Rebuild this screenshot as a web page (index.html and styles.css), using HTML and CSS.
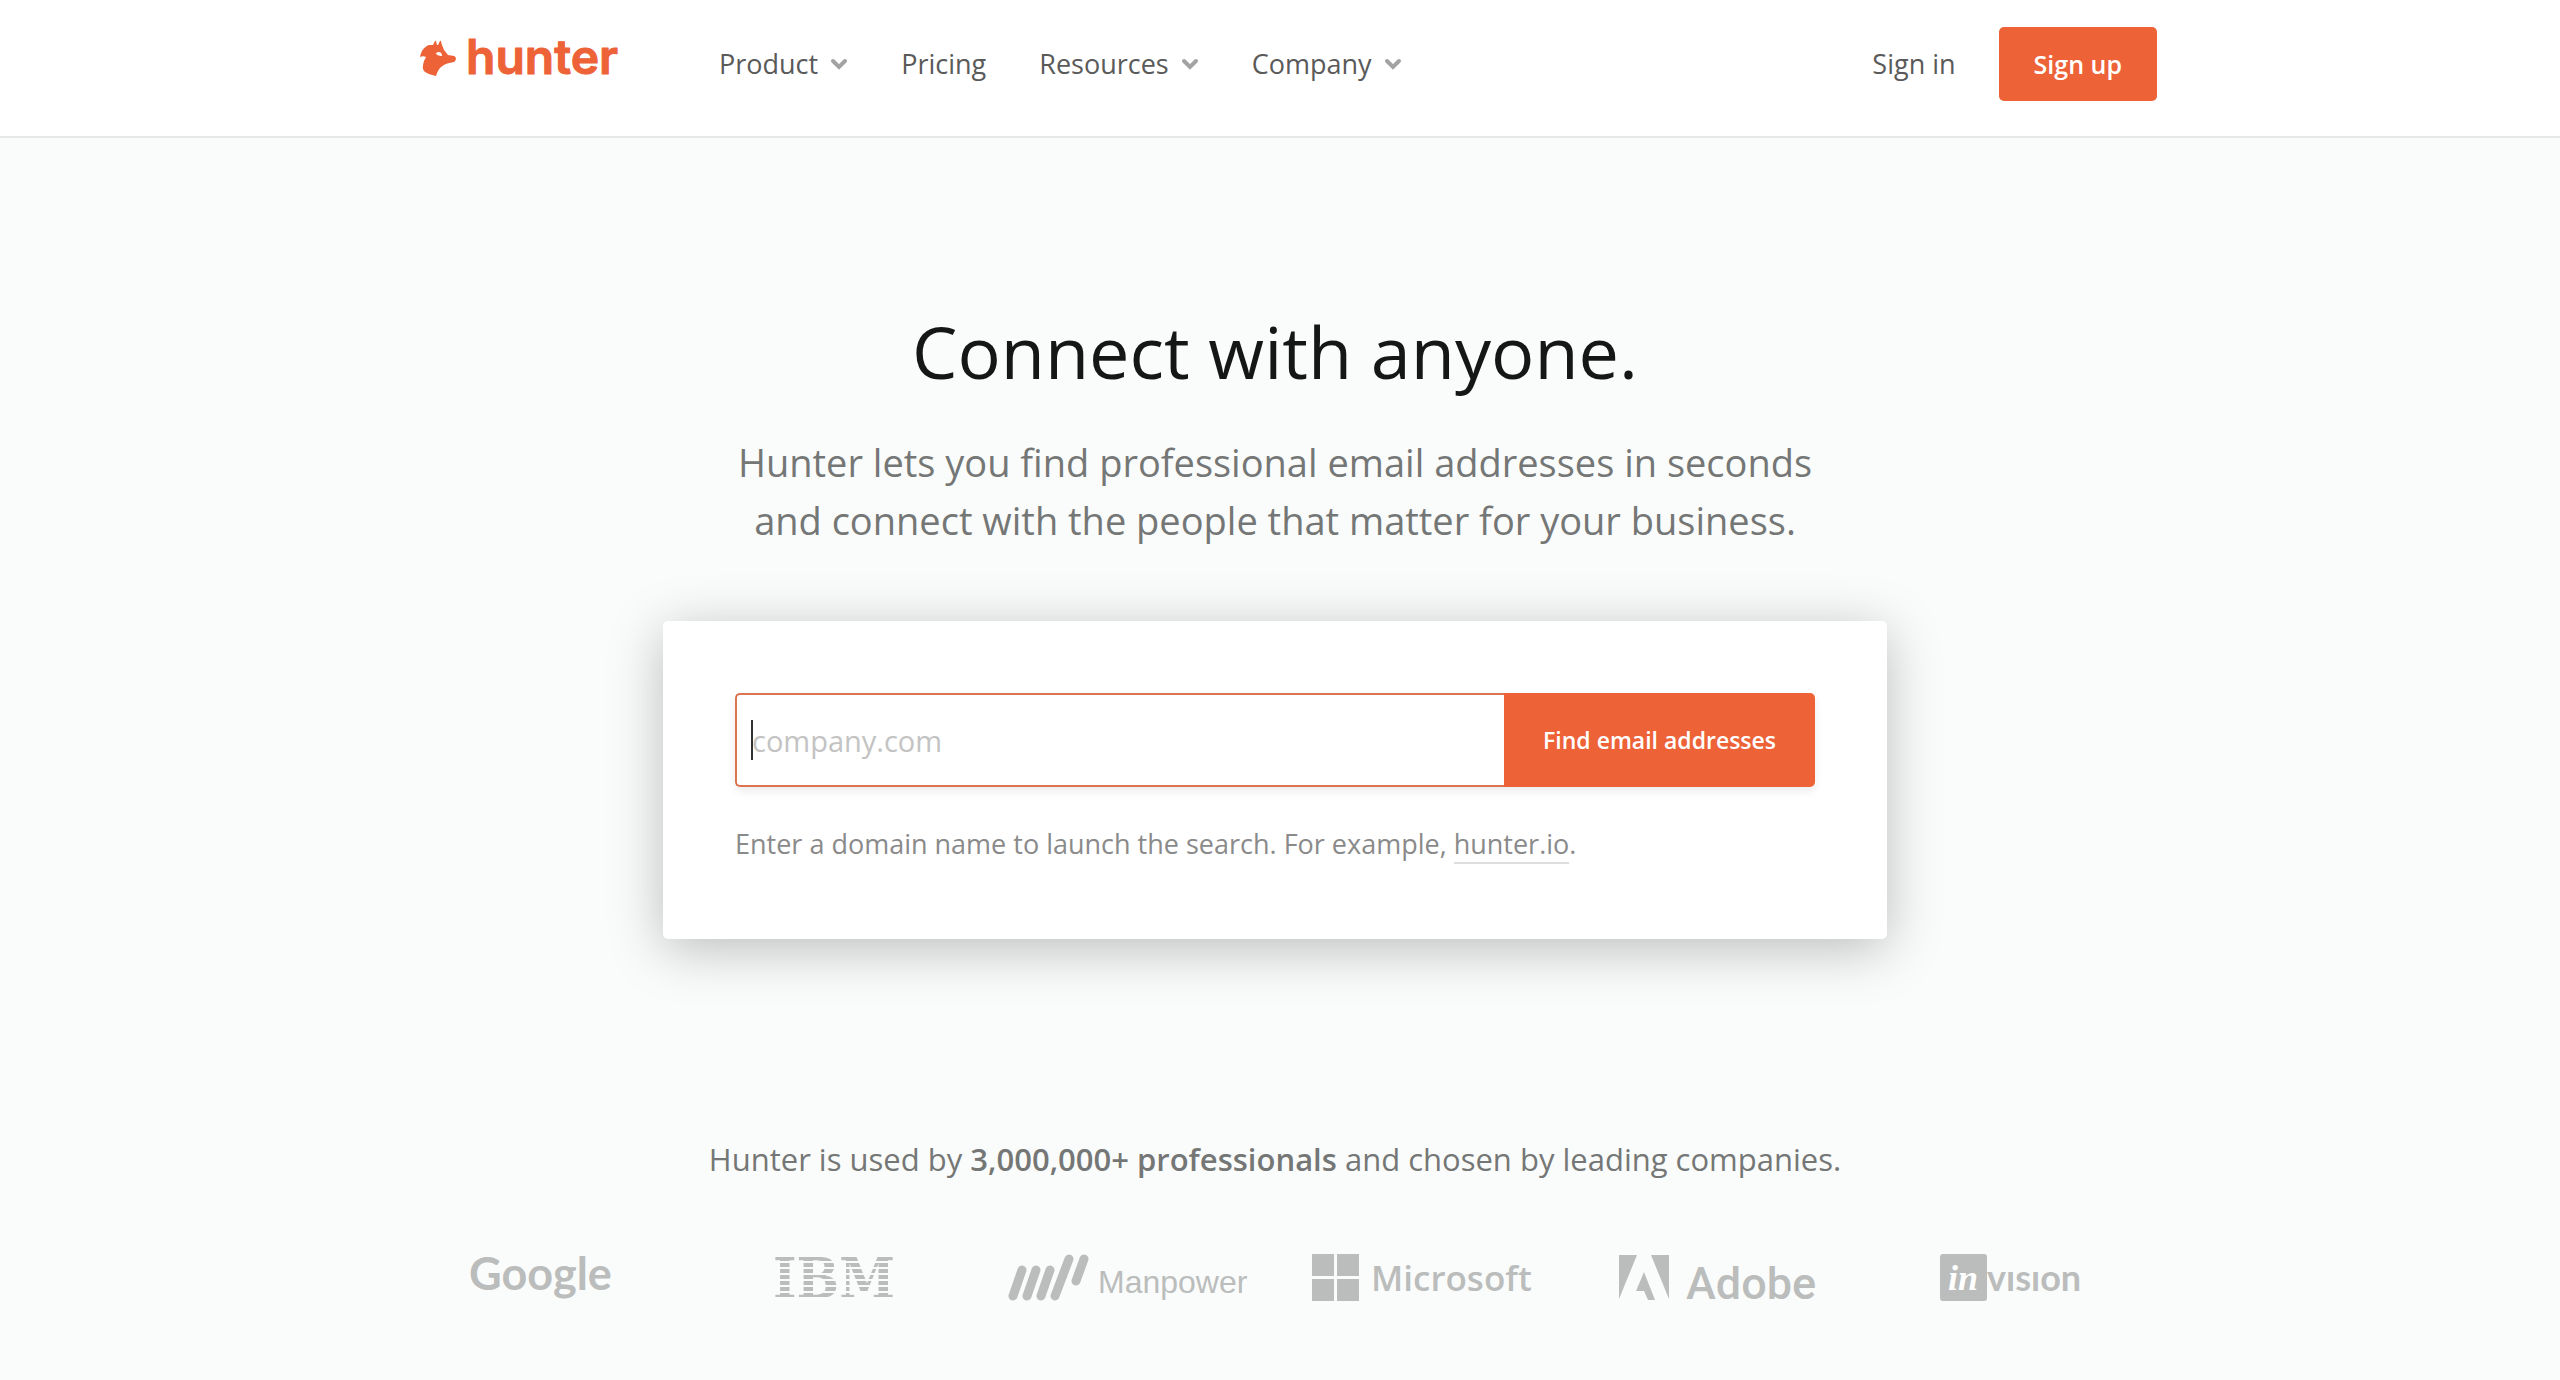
FILE: index.html
```html
<!DOCTYPE html>
<html lang="en">
<head>
    <meta charset="utf-8">
    <title>Hunter</title>
    <link rel="stylesheet" href="styles.css">
</head>
<body>
    <header class="header">
        <div class="container header-inner">
            <a class="logo" href="#" aria-label="Hunter">
                <svg width="240" height="60" viewBox="0 0 240 60">
                    <path d="M27 32c1-6 4-10 9-12h4l2-4c1-1 1 0 2 4h1l2-4c1-1 1 0 2 4l2 5 4 5 6 1c3 1 2 5 0 6-7 1-11 3-14 6-2 2-3 5-4 8-5-1-10-3-12-5-2-3-1-6 0-10l2-4c-2-1-4-1-6 0z"/>
                    <path class="logo-eye" d="M43 28c3-2 6-1 6 3-3 0-6-1-6-3z"/>
                    <text x="73" y="49">hunter</text>
                </svg>
            </a>
            <nav class="nav">
                <a href="#">Product <svg class="chevron" width="18" height="12" viewBox="0 0 18 12"><path d="M3 3l6 6 6-6"/></svg></a>
                <a href="#">Pricing</a>
                <a href="#">Resources <svg class="chevron" width="18" height="12" viewBox="0 0 18 12"><path d="M3 3l6 6 6-6"/></svg></a>
                <a href="#">Company <svg class="chevron" width="18" height="12" viewBox="0 0 18 12"><path d="M3 3l6 6 6-6"/></svg></a>
            </nav>
            <div class="account">
                <a href="#">Sign in</a>
                <button class="btn btn-signup" type="button">Sign up</button>
            </div>
        </div>
    </header>

    <main class="main">
        <section class="hero">
            <h1>Connect with anyone.</h1>
            <p class="tagline">Hunter lets you find professional email addresses in seconds<br>and connect with the people that matter for your business.</p>
            <div class="card">
                <form class="search">
                    <input type="text" placeholder="company.com" aria-label="Domain name">
                    <button class="btn" type="submit">Find email addresses</button>
                </form>
                <p class="hint">Enter a domain name to launch the search. For example, <a href="#">hunter.io</a>.</p>
            </div>
        </section>

        <section class="container clients">
            <p>Hunter is used by <strong>3,000,000+ professionals</strong> and chosen by leading companies.</p>
            <ul class="client-list">
                <li>
                    <svg width="140" height="48" viewBox="0 0 140 48" aria-label="Google">
                        <text class="google" x="-1" y="36">Google</text>
                    </svg>
                </li>
                <li><span class="ibm">IBM</span></li>
                <li>
                    <svg width="240" height="48" viewBox="0 0 240 48" aria-label="Manpower">
                        <path class="pills" d="M5 42l9-26M19 42l9-26M33 42l9-26M47 42L61 5M68 27l8-22"/>
                        <text class="manpower" x="90" y="39">Manpower</text>
                    </svg>
                </li>
                <li>
                    <svg width="220" height="48" viewBox="0 0 220 48" aria-label="Microsoft">
                        <path d="M0 0h22v22H0zM25 0h22v22H25zM0 25h22v22H0zM25 25h22v22H25z"/>
                        <text class="microsoft" x="59" y="37">Microsoft</text>
                    </svg>
                </li>
                <li>
                    <svg width="194" height="48" viewBox="0 0 194 48" aria-label="Adobe">
                        <path d="M0 1h18L0 45zM32 1h18v44zM25 18l11 28h-7l-4-9h-8z"/>
                        <text class="adobe" x="67" y="45">Adobe</text>
                    </svg>
                </li>
                <li>
                    <svg width="140" height="48" viewBox="0 0 140 48" aria-label="InVision">
                        <rect width="47" height="47" rx="3"/>
                        <text class="invision-in" x="8" y="36">in</text>
                        <text class="invision" x="47" y="37">vısıon</text>
                    </svg>
                </li>
            </ul>
        </section>
    </main>
</body>
</html>
```
FILE: styles.css
```css
:root {
    --orange: #ed6237;
    --bg: #fafcfb;
    --logo-gray: #bbbdbc;
}

* {
    box-sizing: border-box;
}

body {
    margin: 0;
    font-family: "Open Sans", sans-serif;
    background: var(--bg);
    color: #5a5a5a;
}

a {
    color: inherit;
    text-decoration: none;
}

h1, p, ul {
    margin: 0;
    padding: 0;
}

.container {
    max-width: 1764px;
    margin: 0 auto;
}

/* Header */
.header {
    background: #fff;
    border-bottom: 2px solid #e6e8e7;
    padding: 27px 10px 35px 0;
}

.header-inner {
    display: flex;
    align-items: center;
    font-size: 27px;
    line-height: 36px;
}

.logo {
    display: flex;
    align-self: flex-start;
    margin-right: 86px;
}

.logo svg {
    fill: var(--orange);
    margin-top: -2px;
}

.logo text {
    font: 600 48px Inter, sans-serif;
    stroke: var(--orange);
    stroke-width: 1;
    stroke-linejoin: round;
}

.logo .logo-eye {
    fill: #fff;
}

.nav {
    display: flex;
    gap: 53px;
}

.nav a {
    display: flex;
    align-items: center;
    gap: 12px;
}

.chevron {
    fill: none;
    stroke: #a3a3a3;
    stroke-width: 4;
    stroke-linecap: round;
}

.account {
    display: flex;
    align-items: center;
    gap: 43px;
    margin-left: auto;
}

.btn {
    background: var(--orange);
    color: #fff;
    border: none;
    border-radius: 5px;
    padding: 0 35px;
    font: 600 23px "Open Sans", sans-serif;
    cursor: pointer;
}

.btn-signup {
    height: 74px;
    font-size: 25px;
}

/* Hero */
.main {
    padding-right: 10px;
}

.hero {
    padding-top: 163px;
    text-align: center;
}

h1 {
    font-size: 72px;
    font-weight: 400;
    line-height: 100px;
    color: #151716;
}

.tagline {
    margin-top: 32px;
    font-size: 38px;
    line-height: 58px;
    color: #757776;
}

.card {
    max-width: 1224px;
    margin: 72px auto 0;
    padding: 72px 72px 76px;
    background: #fff;
    border-radius: 5px;
    box-shadow: 0 10px 54px rgba(0, 0, 0, 0.25);
    text-align: left;
}

.search {
    display: flex;
    height: 94px;
    border-radius: 5px;
    box-shadow: 0 4px 10px rgba(0, 0, 0, 0.08);
}

.search input {
    flex: 1;
    min-width: 0;
    border: 2px solid #dc7452;
    border-right: none;
    border-radius: 5px 0 0 5px;
    padding: 0 15px;
    font: 29px "Open Sans", sans-serif;
    /* text cursor */
    background: #fff linear-gradient(#333, #333) no-repeat 14px center / 2px 40px;
    outline: none;
}

.search input::placeholder {
    color: #c3c3c3;
}

.search .btn {
    border-radius: 0 5px 5px 0;
    padding: 0 39px;
}

.hint {
    margin-top: 38px;
    font-size: 27px;
    line-height: 38px;
    color: #8a8a8a;
}

.hint a {
    border-bottom: 2px solid #ddd;
}

/* Clients */
.clients {
    padding-top: 198px;
    text-align: center;
}

.clients p {
    font-size: 31px;
    line-height: 44px;
    color: #757776;
}

.clients strong {
    font-weight: 600;
}

.client-list {
    display: flex;
    margin-top: 73px;
    list-style: none;
}

.client-list li {
    flex: 1;
    display: flex;
    justify-content: center;
    height: 48px;
}

.client-list svg {
    fill: var(--logo-gray);
    overflow: visible;
}

.google {
    font: 700 45px Lato, sans-serif;
}

/* striped lettering */
.ibm {
    font: 700 56px/48px "DejaVu Serif Condensed", "DejaVu Serif", serif;
    color: transparent;
    background: linear-gradient(var(--logo-gray) 4px, transparent 4px) 0 3px / 100% 6px;
    background-clip: text;
    -webkit-background-clip: text;
}

.pills {
    fill: none;
    stroke: var(--logo-gray);
    stroke-width: 9;
    stroke-linecap: round;
}

.manpower {
    font: 32px "Liberation Sans", sans-serif;
}

.microsoft {
    font: 600 35px "Open Sans", sans-serif;
}

.adobe {
    font: 500 45px Roboto, sans-serif;
}

.invision {
    font: 700 36px Lato, sans-serif;
}

.client-list .invision-in {
    font: italic 700 36px "Liberation Serif", serif;
    fill: #fff;
}
```
